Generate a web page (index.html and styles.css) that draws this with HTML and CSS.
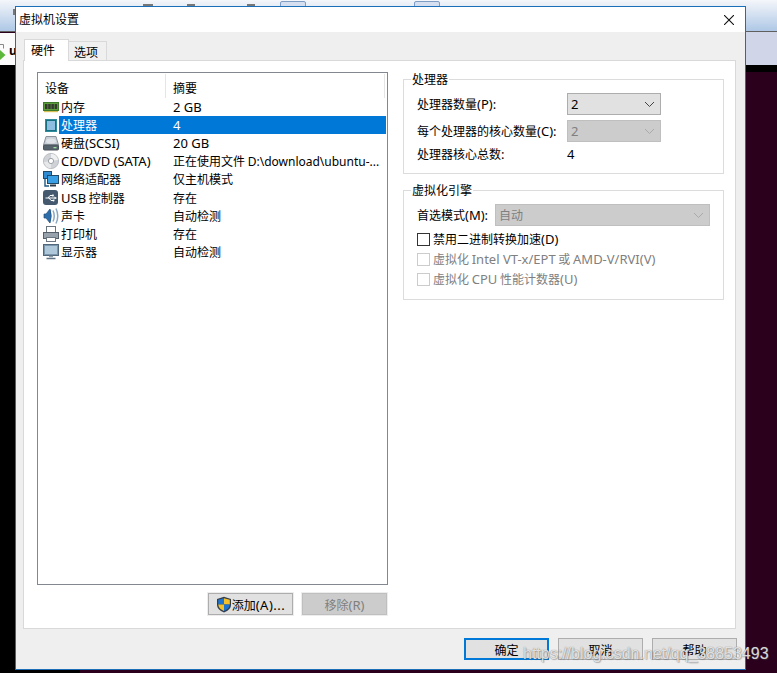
FILE: index.html
```html
<!DOCTYPE html>
<html lang="zh">
<head>
<meta charset="utf-8">
<title>虚拟机设置</title>
<link rel="stylesheet" href="styles.css">
</head>
<body>
<div class="desk">
  <div class="bg-top"><i class="tk t1"></i><i class="tk t2"></i><i class="tk t3"></i><i class="tk t4"></i><i class="bx b1"></i><i class="bx b2"></i></div>
  <div class="bg-mid-left"><svg class="arrow" width="6" height="18" viewBox="0 0 6 18"><path d="M0 1.5h3.5v4" fill="none" stroke="#888"/><path d="M0 7L5.5 12L0 17Z" fill="#5cb83a"/></svg><b class="u">u</b></div>
  <div class="bg-mid-right"></div>
  <div class="bg-black-left"></div>
  <div class="bg-black-right"></div>
  <div class="bg-bottom"></div>
</div>

<main class="dialog">
  <header class="titlebar">
    <span>虚拟机设置</span>
    <svg class="close" width="10" height="10" viewBox="0 0 10 10"><path d="M0 0L10 10M10 0L0 10" stroke="#111" stroke-width="1.1" fill="none"/></svg>
  </header>
  <div class="body">
    <nav class="tabs">
      <span class="tab active">硬件</span>
      <span class="tab">选项</span>
    </nav>
    <section class="panel">
      <div class="left">
        <div class="list">
          <div class="list-head">
            <span class="h1">设备</span>
            <span class="h2">摘要</span>
          </div>
          <div class="row">
            <svg class="ic" width="16" height="18" viewBox="0 0 16 18"><rect x="0" y="4" width="16" height="9" fill="#5d9c3c"/><rect x="0.5" y="4.5" width="15" height="8" fill="none" stroke="#3f7a28"/><path d="M2 6h2.5v5H2zM5.2 6h2.5v5H5.2zM8.4 6h2.5v5H8.4zM11.6 6h2.5v5h-2.5z" fill="#35392f"/><path d="M1 13h14v1.2H1z" fill="#d6bf55"/></svg>
            <div class="cell"><span class="name">内存</span><span class="val"><span class="l">2 GB</span></span></div>
          </div>
          <div class="row sel">
            <svg class="ic" width="16" height="18" viewBox="0 0 16 18"><rect x="2" y="3" width="12" height="13" fill="#17707f"/><rect x="2.5" y="3.5" width="11" height="12" fill="none" stroke="#2f8c9c"/><rect x="4" y="5" width="8" height="9" fill="#8dbde0"/></svg>
            <div class="cell"><span class="name">处理器</span><span class="val"><span class="l">4</span></span></div>
          </div>
          <div class="row">
            <svg class="ic" width="16" height="18" viewBox="0 0 16 18"><path d="M3 2.5h10L15.5 11H.5Z" fill="#c9cfd6" stroke="#8a929a"/><ellipse cx="8" cy="7" rx="5" ry="2.5" fill="#dfe3e8"/><rect x="0.5" y="11" width="15" height="5" rx="1" fill="#56626c" stroke="#4a535b"/><rect x="10.5" y="13" width="3" height="1.3" fill="#9be09b"/></svg>
            <div class="cell"><span class="name">硬盘<span class="l">(SCSI)</span></span><span class="val"><span class="l">20 GB</span></span></div>
          </div>
          <div class="row">
            <svg class="ic" width="16" height="18" viewBox="0 0 16 18"><circle cx="8" cy="9" r="7.6" fill="#cfd2d6" stroke="#b0b4b8" stroke-width=".8"/><path d="M8 1.8A7.2 7.2 0 0 1 15 8L8 9Z" fill="#eef0f2"/><path d="M8 16.2A7.2 7.2 0 0 1 1 10L8 9Z" fill="#e6e8ea"/><circle cx="8" cy="9" r="2.6" fill="#fff" stroke="#9da2a6"/></svg>
            <div class="cell"><span class="name"><span class="l">CD/DVD (SATA)</span></span><span class="val">正在使用文件 <span class="l s">D:\download\ubuntu-...</span></span></div>
          </div>
          <div class="row">
            <svg class="ic" width="16" height="18" viewBox="0 0 16 18"><rect x="0.5" y="1.5" width="8" height="7" fill="#2f8ad0" stroke="#1f4a6a"/><path d="M2 9v7h4" fill="none" stroke="#1f5a80" stroke-width="1.4"/><rect x="4.5" y="5.5" width="11" height="8" fill="#39a0e6" stroke="#1f4a6a"/><path d="M7 15.5h6" stroke="#2a3a46" stroke-width="2"/></svg>
            <div class="cell"><span class="name">网络适配器</span><span class="val">仅主机模式</span></div>
          </div>
          <div class="row">
            <svg class="ic" width="16" height="18" viewBox="0 0 16 18"><rect x="0" y="1" width="15" height="15" rx="3" fill="#44596e"/><path d="M2.5 9h9M5 9l2-2.5h2M6 9l2 2.5h2" stroke="#fff" fill="none" stroke-width="1"/><path d="M14 9l-2.6-1.6v3.2Z" fill="#fff"/><rect x="9" y="5.6" width="1.8" height="1.8" fill="#fff"/><circle cx="10.5" cy="11.5" r="1" fill="#fff"/></svg>
            <div class="cell"><span class="name"><span class="l">USB</span> 控制器</span><span class="val">存在</span></div>
          </div>
          <div class="row">
            <svg class="ic" width="16" height="18" viewBox="0 0 16 18"><path d="M6 9q0-3 2-6" stroke="#8fa6bc" stroke-width="1" fill="none"/><path d="M1 7h2l4-5q2.500 7 0 14L3 11H1Z" fill="#2d6eaa" stroke="#204f7c" stroke-width=".7"/><path d="M10 3.500q2.500 5.500 0 11M13 1.500q3.500 7.500 0 15" stroke="#8aa8c4" stroke-width="1.5" fill="none"/></svg>
            <div class="cell"><span class="name">声卡</span><span class="val">自动检测</span></div>
          </div>
          <div class="row">
            <svg class="ic" width="16" height="18" viewBox="0 0 16 18"><rect x="3.500" y="1.500" width="9" height="6" fill="#fff" stroke="#6b7580"/><rect x="0.500" y="7.500" width="15" height="6" fill="#98a2ac" stroke="#56606a"/><rect x="3.500" y="12.500" width="9" height="4" fill="#fff" stroke="#6b7580"/></svg>
            <div class="cell"><span class="name">打印机</span><span class="val">存在</span></div>
          </div>
          <div class="row">
            <svg class="ic" width="16" height="18" viewBox="0 0 16 18"><rect x="0.500" y="1.500" width="15" height="11" fill="#7a97ae" stroke="#52687a"/><rect x="2" y="3" width="12" height="8" fill="#afc8da"/><path d="M6 13.500h4" stroke="#8a9aa6" stroke-width="1.500"/><path d="M3.500 15.500h9" stroke="#5f7484" stroke-width="1.500"/></svg>
            <div class="cell"><span class="name">显示器</span><span class="val">自动检测</span></div>
          </div>
        </div>
        <div class="list-btns">
          <button class="btn add"><svg width="16" height="17" viewBox="0 0 16 17"><path d="M8 .8L15 3v6q0 5-7 7.400Q1 14 1 9V3Z" fill="#333d4c"/><path d="M8 2.200V8.500H2.200V3.800Z" fill="#1f74d0"/><path d="M8 2.200l5.800 1.600V8.500H8Z" fill="#f4c02c"/><path d="M2.200 8.500H8V15q-5.200-2-5.800-6.500Z" fill="#f4c02c"/><path d="M8 8.500h5.800Q13.200 13 8 15Z" fill="#1f74d0"/></svg><span>添加<span class="l wide-l">(A)...</span></span></button>
          <button class="btn off">移除<span class="l">(R)</span></button>
        </div>
      </div>
      <div class="right">
        <fieldset class="group g1">
          <legend>处理器</legend>
          <div class="cpu-grid">
            <label>处理器数量<span class="l">(P):</span></label>
            <div class="select"><span class="l">2</span><svg width="11" height="6" viewBox="0 0 11 6"><path d="M1 1l4.500 4.500L10 1" stroke="#444" fill="none"/></svg></div>
            <label>每个处理器的核心数量<span class="l">(C):</span></label>
            <div class="select dis"><span class="l">2</span><svg width="11" height="6" viewBox="0 0 11 6"><path d="M1 1l4.500 4.500L10 1" stroke="#aaa" fill="none"/></svg></div>
            <label class="total">处理器核心总数<span class="l">:</span></label>
            <span class="total"><span class="l">4</span></span>
          </div>
        </fieldset>
        <fieldset class="group g2">
          <legend>虚拟化引擎</legend>
          <div class="mode">
            <label>首选模式<span class="l">(M):</span></label>
            <div class="select dis wide"><span>自动</span><svg width="11" height="6" viewBox="0 0 11 6"><path d="M1 1l4.500 4.500L10 1" stroke="#aaa" fill="none"/></svg></div>
          </div>
          <div class="check"><i class="box"></i><span>禁用二进制转换加速<span class="l">(D)</span></span></div>
          <div class="check off"><i class="box"></i><span>虚拟化 <span class="l">Intel VT-x/EPT</span> 或 <span class="l">AMD-V/RVI(V)</span></span></div>
          <div class="check off"><i class="box"></i><span>虚拟化 <span class="l">CPU</span> 性能计数器<span class="l">(U)</span></span></div>
        </fieldset>
      </div>
    </section>
    <footer class="footer">
      <button class="btn default">确定</button>
      <button class="btn">取消</button>
      <button class="btn">帮助</button>
    </footer>
  </div>
</main>
<div class="watermark">https://blog.csdn.net/qq_38853493</div>
</body>
</html>
```
FILE: styles.css
```css
* { box-sizing: border-box; }
html, body { margin: 0; height: 100%; }
body {
  width: 777px;
  height: 673px;
  position: relative;
  overflow: hidden;
  background: #2a001c;
  font: 12px/16px "Noto Sans CJK SC", "Noto Sans", sans-serif;
  color: #000;
}
.l { font-family: "Noto Sans", "Noto Sans CJK SC", sans-serif; font-size: 13px; }
.l.s { font-size: 12px; }
.wide-l { letter-spacing: .5px; }

/* desktop behind the dialog */
.desk { position: absolute; inset: 0; }
.bg-top {
  position: absolute; left: 0; top: 0; width: 777px; height: 32px;
  background: linear-gradient(#f4f6fa, #aec8e6);
  border-bottom: 1px solid #5f5f5f;
}
.tk { position: absolute; top: 4px; height: 2px; background: #777; }
.t1 { left: 143px; width: 10px; }
.t2 { left: 187px; width: 8px; }
.t3 { left: 247px; width: 8px; }
.t4 { left: 13px; top: 9px; width: 2px; height: 6px; }
.bx { position: absolute; top: 1px; width: 26px; height: 6px; border: 1px solid #7f9dc4; border-radius: 2px 2px 0 0; background: #d5dff0; }
.b1 { left: 280px; }
.b2 { left: 414px; }
.bg-mid-left { position: absolute; left: 0; top: 33px; width: 15px; height: 32px; background: #fbfbfb; }
.arrow { position: absolute; left: 0; top: 10px; }
.u { position: absolute; left: 9px; top: 10px; font: bold 12px/16px "Noto Sans", sans-serif; }
.bg-mid-right { position: absolute; left: 746px; top: 32px; width: 31px; height: 33px; background: #d1d5e8; }
.bg-black-left { position: absolute; left: 0; top: 65px; width: 15px; height: 608px; background: #000; }
.bg-black-right { position: absolute; left: 746px; top: 65px; width: 31px; height: 7px; background: #000; }
.bg-bottom { position: absolute; left: 0; top: 670px; width: 80px; height: 3px; background: #000; }

/* dialog */
.dialog {
  position: absolute; left: 15px; top: 6px;
  width: 731px; height: 664px;
  border: 1px solid #1a6fb8;
  display: flex; flex-direction: column;
  background: #efefef;
}
.titlebar {
  height: 25px; flex: none;
  background: #fff;
  display: flex; align-items: center; justify-content: space-between;
  padding: 0 11px 2px 3px;
}
.close { margin-top: 2px; }
.body { flex: 1; display: flex; flex-direction: column; padding: 8px 9px 0 7px; }
.tabs { display: flex; padding-left: 1px; height: 21px; position: relative; z-index: 1; margin-bottom: -1px; }
.tab {
  width: 38px; height: 20px; margin-top: 1px;
  background: #f0f0f0;
  border: 1px solid #d9d9d9; border-left: 0;
  line-height: 19px; padding-left: 5px;
}
.tab.active {
  width: 45px; height: 22px; margin-top: -1px;
  background: #fff; border: 1px solid #d9d9d9; border-bottom: 0;
  line-height: 20px; padding-left: 6px;
}
.panel {
  width: 713px; height: 569px;
  background: #fff; border: 1px solid #d9d9d9;
  padding: 11px 0 0 13px;
  display: flex; gap: 15px;
}
.left { width: 351px; }
.list { height: 513px; border: 1px solid #828790; background: #fff; }
.list-head { height: 25px; display: flex; align-items: center; position: relative; }
.h1 { width: 128px; padding-left: 7px; border-right: 1px solid #e5e5e5; height: 24px; line-height: 28px; }
.h2 { flex: 1; padding-left: 7px; margin-right: 2px; border-right: 1px solid #e5e5e5; height: 24px; line-height: 28px; }
.row { display: flex; height: 18.12px; align-items: center; padding-right: 1px; }
.ic { flex: none; margin-left: 5px; width: 16px; height: 18px; display: block; }
.cell { flex: 1; display: flex; height: 100%; align-items: center; line-height: 18px; white-space: nowrap; padding-left: 2px; }
.name { width: 112px; }
.val { flex: 1; }
.sel .cell { background: #0078d7; color: #fff; }
.list-btns { display: flex; justify-content: flex-end; gap: 9px; margin-top: 8px; padding-right: 1px; }
.btn {
  width: 85px; height: 22px; padding: 1px 0 0;
  background: #e1e1e1; border: 1px solid #adadad;
  font: inherit; color: #000;
  display: flex; align-items: center; justify-content: center;
  line-height: 16px;
}
.btn.add { outline: 1px solid #ededed; }
.btn.off { background: #ccc; border-color: #bfbfbf; color: #7f7f7f; outline: 1px solid #ededed; }
.btn.default { border: 2px solid #0078d7; }

/* right column */
.right { width: 321px; margin-top: -1px; }
.group {
  margin: 0; border: 1px solid #dcdcdc; padding: 6px 13px 0;
  min-width: 0;
}
.group legend { padding: 0 1px; margin-left: -6px; line-height: 16px; }
.g1 { height: 103px; margin-bottom: 8px; }
.g2 { height: 118px; }
.cpu-grid { display: grid; grid-template-columns: 150px 94px; row-gap: 5px; align-items: center; }
.cpu-grid label { line-height: 22px; white-space: nowrap; }
.total { line-height: 14px !important; }
.select {
  height: 22px; background: #e1e1e1; border: 1px solid #adadad;
  display: flex; align-items: center; justify-content: space-between;
  padding: 0 5px 0 3px;
}
.select.dis { background: #ccc; border-color: #bfbfbf; color: #7f7f7f; }
.select.wide { width: 215px; }
.mode { display: flex; width: 293px; align-items: center; }
.mode label { width: 78px; white-space: nowrap; }
.check { display: flex; align-items: center; height: 20px; white-space: nowrap; gap: 3px; }
.mode + .check { margin-top: 3px; }
.box { width: 13px; height: 13px; border: 1px solid #333; background: #fff; }
.check.off { color: #808080; }
.check.off .box { border-color: #ccc; }

.footer { display: flex; justify-content: flex-end; gap: 9px; padding-top: 9px; margin-right: -1px; }

.watermark {
  position: absolute; left: 523px; top: 645px;
  font: 16px/18px "Liberation Sans", sans-serif;
  color: rgba(255, 255, 255, .8);
  text-shadow: 0 0 1px rgba(90, 90, 90, .9), 1px 1px 1px rgba(90, 90, 90, .35);
  white-space: nowrap;
}
```
